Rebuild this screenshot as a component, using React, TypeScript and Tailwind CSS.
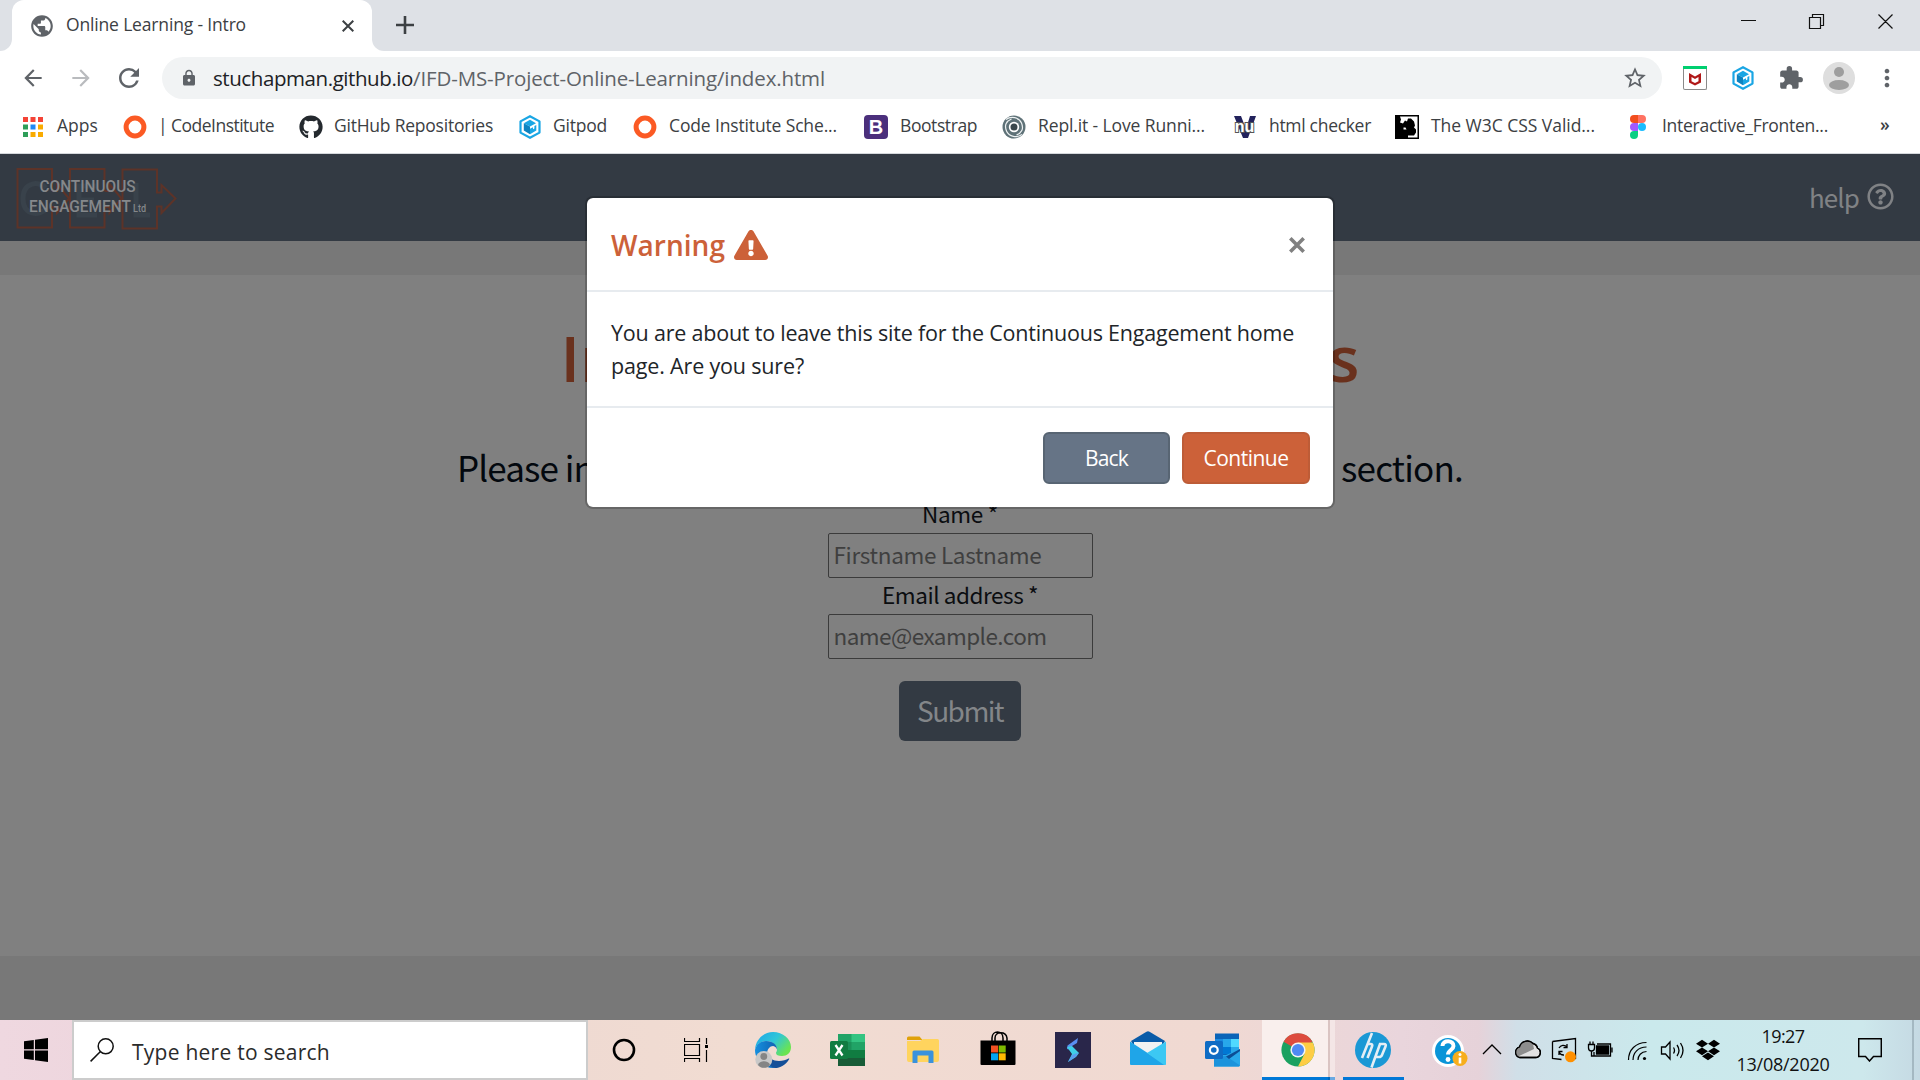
import { useLayoutEffect, useRef, useState } from "react";
import type { ReactNode } from "react";
import { MdArrowBack, MdArrowForward, MdRefresh, MdLock, MdStarBorder, MdExtension, MdMoreVert, MdPublic } from "react-icons/md";
import { FaGithub, FaExclamationTriangle, FaRegQuestionCircle, FaDropbox } from "react-icons/fa";

/* Single-line text whose tracking is adjusted so that it fills the given width. */
function Fit({ w, children, className = "" }: { w: number; children: string; className?: string }) {
  const ref = useRef<HTMLSpanElement>(null);
  const [ls, setLs] = useState(0);
  useLayoutEffect(() => {
    if (ref.current) setLs((w - ref.current.getBoundingClientRect().width) / children.length);
  }, [w, children]);
  return (
    <span ref={ref} className={"inline-block shrink-0 whitespace-pre " + className} style={{ letterSpacing: `${ls}px` }}>
      {children}
    </span>
  );
}

function Gitpod() {
  return (
    <svg viewBox="0 0 22 24" className="h-6 w-[22px]">
      <path d="M11 1.200 20.500 6.400v11.200L11 22.800 1.500 17.600V6.400z" fill="#fff" stroke="#1aa6e4" strokeWidth="2.200" strokeLinejoin="round" />
      <path d="M11 4.800 17 8.200 11 11.600 4.800 8.200z" fill="#1aa6e4" />
      <path d="M4.800 8.200 11 11.600v7.600l-6.200-3.600z" fill="#0d83c0" />
      <path d="M17.300 10v5.600L11 19.200v-5.400l3-1.600v2l1.400-.8V11z" fill="#1aa6e4" />
    </svg>
  );
}
function Ring() {
  return (
    <svg viewBox="0 0 24 24" className="size-6">
      <circle cx="12" cy="12" r="8.900" fill="none" stroke="#fb5a24" strokeWidth="5" />
    </svg>
  );
}
function AppsGrid() {
  const c = ["#f44336", "#f44336", "#f44336", "#2e9e59", "#1e88f5", "#f9ab00", "#2e9e59", "#f9ab00", "#f9ab00"];
  return (
    <svg viewBox="0 0 20 20" className="size-5">
      {c.map((f, i) => (
        <rect key={i} x={(i % 3) * 7.5} y={Math.floor(i / 3) * 7.5} width="5" height="5" fill={f} />
      ))}
    </svg>
  );
}
function Bootstrap() {
  return (
    <span className="flex size-6 items-center justify-center rounded-[4px] bg-[#4b2f7c] font-['Liberation_Sans',sans-serif] text-[20px] leading-none font-bold text-white">B</span>
  );
}
function Swirl() {
  return (
    <svg viewBox="0 0 24 24" className="size-6">
      <circle cx="12" cy="12" r="11.500" fill="#5f7278" />
      <g fill="none" stroke="#eef2f3" strokeWidth="1.200">
        <path d="M4 4.500C9 1 17 2 19.500 8s0 10-5 12" />
        <path d="M20 19.500C15 23 7 22 4.500 16s0-10 5-12" />
      </g>
      <circle cx="12" cy="12" r="5.200" fill="#fff" />
      <circle cx="12" cy="12" r="3.500" fill="#3a474c" />
    </svg>
  );
}
function Nu() {
  return (
    <svg viewBox="0 0 26 24" className="h-6 w-[26px]">
      <path d="M2 1h7l5 13 4-13h6l-8 22h-5z" fill="#22225c" />
      <text x="12.500" y="17" textAnchor="middle" fontFamily="Liberation Sans, sans-serif" fontSize="16" fontWeight="bold" fill="#fff" stroke="#555" strokeWidth="2" paintOrder="stroke">nu</text>
    </svg>
  );
}
function W3C() {
  return (
    <svg viewBox="0 0 24 24" className="size-6">
      <path d="M0 0h24v24H0z" />
      <path d="M5 1.500h17.500v21H13v-2h6l2-3v-3l-2-2 1-2-1-4-3-3h-3l-1 3-2-1-2 3-3-1 1-3z" fill="#fff" />
      <path d="M8.500 12.500h2l1 2h-3z" fill="#fff" />
    </svg>
  );
}
function Figma() {
  return (
    <svg viewBox="0 0 16 24" className="h-6 w-4">
      <path d="M8 0H4a4 4 0 0 0 0 8h4z" fill="#f24e1e" />
      <path d="M8 0h4a4 4 0 0 1 0 8H8z" fill="#ff7262" />
      <path d="M8 8H4a4 4 0 0 0 0 8h4z" fill="#a259ff" />
      <circle cx="12" cy="12" r="4" fill="#1abcfe" />
      <path d="M8 16H4a4 4 0 1 0 4 4z" fill="#0acf83" />
    </svg>
  );
}

function Bookmark({ icon, box, gap, label, w, end }: { icon: ReactNode; box: string; gap: string; label: string; w: number; end: string }) {
  return (
    <div className={"flex shrink-0 items-center " + gap + " " + end}>
      <span className={"flex shrink-0 justify-center " + box}>{icon}</span>
      <Fit w={w} className="pb-[3px]">{label}</Fit>
    </div>
  );
}

function Browser() {
  return (
    <header className="font-['Open_Sans','Noto_Sans',sans-serif] text-[#3c4043]">
      <div className="flex h-[51px] bg-[#dee1e6]">
        <div className="flex h-full w-3 items-end bg-white">
          <div className="h-full w-full rounded-br-[12px] bg-[#dee1e6]" />
        </div>
        <div className="flex h-full w-[360px] bg-[#dee1e6]">
          <div className="flex h-full w-full items-center rounded-t-[12px] bg-white pl-[17px]">
            <MdPublic className="size-[26px] text-[#5f6368]" />
            <div className="ml-[11px] w-[268px] pb-0.5 text-[17.500px]">
              <Fit w={180}>Online Learning - Intro</Fit>
            </div>
            <svg viewBox="0 0 12 12" className="ml-2 size-3 shrink-0" stroke="#3c4043" strokeWidth="2"><path d="m.7.7 10.600 10.600M11.300.7.7 11.300" /></svg>
          </div>
        </div>
        <div className="h-full w-3 bg-white"><div className="h-full w-full rounded-bl-[12px] bg-[#dee1e6]" /></div>
        <svg viewBox="0 0 18 18" className="mt-4 ml-3 size-[18px]" stroke="#3c4043" strokeWidth="2.600"><path d="M9 0v18M0 9h18" /></svg>
        <svg viewBox="0 0 160 20" className="mt-3 mr-[24px] ml-auto h-5 w-[160px]" fill="none" stroke="#111" strokeWidth="1.200">
          <path d="M5 8.500h15M73.500 5.500h11v11h-11zM76.500 5.500v-3h11v11h-3M142.500 2.500l14 14M156.500 2.500l-14 14" />
        </svg>
      </div>
      <div className="flex h-[54px] items-center bg-white pl-[20px] text-[#5f6368]">
        <MdArrowBack className="size-[26px]" />
        <MdArrowForward className="ml-[22px] size-[26px] text-[#b9bbbe]" />
        <MdRefresh className="ml-[20px] size-[30px]" />
        <div className="ml-[18px] flex h-[42px] w-[1500px] items-center rounded-full bg-[#f1f3f4] pl-[18px]">
          <MdLock className="size-[18px]" />
          <div className="ml-[15px] flex pt-px text-[20.500px]">
            <Fit w={200} className="text-[#202124]">stuchapman.github.io</Fit>
            <Fit w={412}>/IFD-MS-Project-Online-Learning/index.html</Fit>
          </div>
          <MdStarBorder className="mr-[14px] ml-auto size-[26px]" />
        </div>
        <div className="ml-[21px] flex h-6 w-6 flex-col items-center rounded-[2px] border border-[#8a8a8a] border-t-0 bg-white">
          <div className="h-[3px] w-6 bg-[#00cf70]" />
          <svg viewBox="0 0 14 14" className="mt-[3px] size-[14px]"><path d="M1 1l6 3.500L13 1v9.500L7 13.500 1 10.500zM3.500 5v4.300L7 11l3.500-1.700V5L7 7z" fill="#b01818" fillRule="evenodd" /></svg>
        </div>
        <div className="ml-[25px]"><Gitpod /></div>
        <MdExtension className="ml-[24px] size-[26px]" />
        <div className="ml-[19px] flex size-8 flex-col items-center justify-center gap-[3px] rounded-full bg-[#dedede]">
          <div className="size-[10px] rounded-full bg-[#9e9e9e]" />
          <div className="h-[10px] w-5 rounded-[50%] bg-[#9e9e9e]" />
        </div>
        <MdMoreVert className="ml-[18px] size-[28px]" />
      </div>
      <div className="flex h-[49px] items-center border-b border-[#d5d8dc] bg-white pb-[5px] pl-[23px] text-[17.500px]">
        <Bookmark icon={<AppsGrid />} box="w-5" gap="gap-[14px]" label="Apps" w={41} end="mr-[25px]" />
        <Bookmark icon={<Ring />} box="w-6" gap="gap-[11px]" label="| CodeInstitute" w={116} end="mr-[25px]" />
        <Bookmark icon={<FaGithub className="size-6 text-[#24292e]" />} box="w-6" gap="gap-[11px]" label="GitHub Repositories" w={159} end="mr-[26px]" />
        <Bookmark icon={<Gitpod />} box="w-[22px]" gap="gap-[12px]" label="Gitpod" w={54} end="mr-[26px]" />
        <Bookmark icon={<Ring />} box="w-6" gap="gap-[12px]" label="Code Institute Sche..." w={168} end="mr-[27px]" />
        <Bookmark icon={<Bootstrap />} box="w-6" gap="gap-[12px]" label="Bootstrap" w={77} end="mr-[25px]" />
        <Bookmark icon={<Swirl />} box="w-6" gap="gap-[12px]" label="Repl.it - Love Runni..." w={167} end="mr-[27px]" />
        <Bookmark icon={<Nu />} box="w-[26px]" gap="gap-[11px]" label="html checker" w={102} end="mr-[24px]" />
        <Bookmark icon={<W3C />} box="w-6" gap="gap-[12px]" label="The W3C CSS Valid..." w={164} end="mr-[35px]" />
        <Bookmark icon={<Figma />} box="w-4" gap="gap-[16px]" label="Interactive_Fronten..." w={166} end="mr-[52px]" />
        <span className="pb-1 font-semibold">»</span>
      </div>
    </header>
  );
}

function Logo() {
  return (
    <svg viewBox="0 0 170 70" className="h-[70px] w-[170px]">
      <g fill="none" stroke="#39424b" strokeWidth="5">
        <path d="M36 25C30 18 13 18 13 35.500S30 53 36 46M86 23H69v29h18M69 37h15M126 20v32h14" />
      </g>
      <g fill="none" stroke="#5d3328" strokeWidth="2">
        <path d="M42 28V6H7.500V64.500H42V44M42 28h5v-7l12 14.500L47 50v-6h-5" />
        <path d="M94.500 28V6H60V64.500H94.500V44M94.500 28h5v-7l12 14.500L99.500 50v-6h-5" />
        <path d="M147 29.500V6.500H112.500V65.500H147V43.500h4.500V50L165.500 35.500 151.500 22v7.500z" />
      </g>
      <g fill="#85888b" fontFamily="Roboto, sans-serif" fontSize="16" fontWeight="500">
        <text x="29.500" y="28.800" textLength="96" lengthAdjust="spacingAndGlyphs">CONTINUOUS</text>
        <text x="19" y="48.800" textLength="102" lengthAdjust="spacingAndGlyphs">ENGAGEMENT</text>
        <text x="123" y="48.800" fontSize="10" textLength="13" lengthAdjust="spacingAndGlyphs">Ltd</text>
      </g>
    </svg>
  );
}

function Field({ label, lw, ph, pw }: { label: string; lw: number; ph: string; pw: number }) {
  return (
    <div className="flex h-[81px] flex-col items-center">
      <div className="flex h-9 items-center pb-0.5 text-[#0b0d10]"><Fit w={lw}>{label}</Fit></div>
      <div className="flex h-[45px] w-[265px] items-center rounded-[2px] border border-[#3b3b3b] pb-0.5 pl-[5px] text-[#3f3f3f]"><Fit w={pw}>{ph}</Fit></div>
    </div>
  );
}

function Page() {
  return (
    <main className="flex h-[866px] flex-col bg-[#808080] font-['Noto_Sans_CJK_SC','Open_Sans',sans-serif]">
      <nav className="flex h-[87px] shrink-0 items-center justify-between bg-[#333a43] pr-[26px] pl-[10px]">
        <Logo />
        <div className="flex items-center gap-2 text-[26px] text-[#808285]">
          <Fit w={50} className="pb-[3px]">help</Fit>
          <FaRegQuestionCircle className="mb-0.5 size-[27px]" />
        </div>
      </nav>
      <div className="h-[34px] shrink-0 bg-[#787878]" />
      <section className="flex grow flex-col items-center">
        <h1 className="mt-[38px] mb-[2px] flex h-[90px] w-[799px] items-center justify-between font-['Open_Sans',sans-serif] text-[64px] font-semibold text-[#6a311d]">
          <span>In</span><span>s</span>
        </h1>
        <p className="mt-[36px] flex h-[56px] w-[1006px] items-center justify-between pb-[3px] text-[35px] text-[#03080e]">
          <Fit w={137}>Please in</Fit><Fit w={122}>section.</Fit>
        </p>
        <div className="text-[22.500px]">
          <Field label="Name *" lw={76} ph="Firstname Lastname" pw={208} />
          <Field label="Email address *" lw={156} ph="name@example.com" pw={213} />
        </div>
        <div className="mt-[22px] flex h-[60px] w-[122px] items-center justify-center rounded-[6px] bg-[#333a43] pb-0.5 text-[28px] text-[#838689]"><Fit w={86}>Submit</Fit></div>
      </section>
      <div className="h-16 shrink-0 bg-[#787878]" />
    </main>
  );
}

function Modal() {
  return (
    <div role="dialog" className="absolute top-[196px] left-[585px] flex h-[313px] w-[750px] flex-col overflow-hidden rounded-[8px] border-2 border-black/20 bg-white bg-clip-padding font-['Open_Sans','Noto_Sans',sans-serif]">
      <div className="flex h-[94px] items-center border-b-2 border-[#e7ebef] pt-0.5 pr-[27px] pl-6">
        <h5 className="flex items-center gap-[9px] text-[28px] font-semibold text-[#cc6139]">
          <Fit w={114}>Warning</Fit>
          <FaExclamationTriangle className="size-[34px]" />
        </h5>
        <svg viewBox="0 0 16 16" className="mr-px mb-px ml-auto size-4" stroke="#808080" strokeWidth="3.600"><path d="m1.300 1.300 13.400 13.400M14.700 1.300 1.300 14.700" /></svg>
      </div>
      <div className="flex h-[116px] flex-col items-start border-b-2 border-[#e7ebef] pt-[24px] pl-6 text-[21.500px] leading-[33px] text-[#212529]">
        <Fit w={683}>You are about to leave this site for the Continuous Engagement home</Fit>
        <Fit w={193}>page. Are you sure?</Fit>
      </div>
      <div className="flex justify-end gap-3 pt-6 pr-[23px] text-[21px] text-white">
        <button className="flex h-[52px] w-[127px] items-center justify-center rounded-[6px] border-2 border-[#586573] bg-[#667486] pt-0.5"><Fit w={43}>Back</Fit></button>
        <button className="flex h-[52px] w-[128px] items-center justify-center rounded-[6px] border-2 border-[#bd5c37] bg-[#cc6139] pt-0.5"><Fit w={85}>Continue</Fit></button>
      </div>
    </div>
  );
}

function Edge() {
  return (
    <svg viewBox="0 0 36 36" className="size-9">
      <defs>
        <linearGradient id="e1" x1="0" x2="1" y1="0" y2=".6"><stop stopColor="#1ea4e9" /><stop offset=".55" stopColor="#2fc6d8" /><stop offset="1" stopColor="#6be450" /></linearGradient>
        <linearGradient id="e2" x1="0" x2="1"><stop stopColor="#1690df" /><stop offset="1" stopColor="#0d5cad" /></linearGradient>
      </defs>
      <path d="M0 17C1 7 9 0 18 0c10 0 18 7 18 15 0 6-4 9-9 9-4 0-6-1-6-3 0-1 1-1.500 1-3.500C22 14 18 9 11 9 6 9 2 12 0 17z" fill="url(#e1)" />
      <path d="M0 18c1-5 5-9 11-9 7 0 11 4 11 8.500-1-3-3-3.500-4-3.500-3 0-6 3-6 8 0 6 5 12 12 12-2 1.300-4 2-6 2C8 36 0 28 0 18z" fill="url(#e2)" />
      <path d="M13 20c0 6 5 9 11 9 4 0 7-1 9.500-2.500.6-.3 1 0 .6.700C31 33 25 36 20 36c-6-1-9-8-7-16z" fill="#144f98" />
      <circle cx="8.800" cy="27.500" r="8.500" fill="#c8c8c8" /><circle cx="8.800" cy="24.500" r="3.400" fill="#858585" /><path d="M3 33c1-5 11-5 12 0-3 3.800-9 3.800-12 0z" fill="#858585" />
    </svg>
  );
}
function Excel() {
  return (
    <svg viewBox="0 0 35 34" className="h-[34px] w-[35px]">
      <path d="M8 1h27v32H8z" fill="#21a366" /><path d="M21.500 1H35v8H21.500z" fill="#33c481" /><path d="M8 17h27v8H8z" fill="#107c41" /><path d="M8 9h13.500v8H8z" fill="#1b9058" /><path d="M8 25h27v8H8z" fill="#185c37" />
      <rect y="8" width="18" height="18" rx="1.500" fill="#107c41" />
      <path d="m5.500 12 7 10.500M12.500 12l-7 10.500" stroke="#fff" strokeWidth="2.300" />
    </svg>
  );
}
function Folder() {
  return (
    <svg viewBox="0 0 32 28" className="h-7 w-8">
      <path d="M0 2a1.500 1.500 0 0 1 1.500-1.500h11l3 3.500H0z" fill="#e0a10a" /><path d="M0 5h13l3-2h14.500A1.500 1.500 0 0 1 32 4.500V24a2 2 0 0 1-2 2H2a2 2 0 0 1-2-2z" fill="#ffd45e" />
      <path d="M5.500 27V16a1.500 1.500 0 0 1 1.500-1.500h18a1.500 1.500 0 0 1 1.500 1.500v11h-5v-7.500h-11V27z" fill="#3a92dc" />
    </svg>
  );
}
function Store() {
  return (
    <svg viewBox="0 0 36 34" className="h-[34px] w-9">
      <path d="M12 10V7c0-8 11-8 11 0v3M15 10V7c0-7 11-7 12 0v3" fill="none" stroke="#000" strokeWidth="1.500" /><path d="M.500 9.500h35V33a1 1 0 0 1-1 1h-33a1 1 0 0 1-1-1z" />
      <path d="M11 14.500h7v7h-7z" fill="#f25022" /><path d="M18.700 14.500h7v7h-7z" fill="#7fba00" /><path d="M11 22.300h7v7h-7z" fill="#00a4ef" /><path d="M18.700 22.300h7v7h-7z" fill="#ffb900" />
    </svg>
  );
}
function Bolt() {
  return (
    <svg viewBox="0 0 36 36" className="size-9">
      <path d="M0 0h36v36H0z" fill="#29264a" /><path d="M23 6 12.500 13.500 12 17l4 1 1-4 5-3z" fill="#5a8ff0" /><path d="m12 15 5-1 7 7-3 4-8 5 4-8z" fill="#3fd0e6" /><path d="m17 23-4 7 8-5.500 2.500-4z" fill="#5b9cee" />
    </svg>
  );
}
function Mail() {
  return (
    <svg viewBox="0 0 36 34" className="h-[34px] w-9">
      <path d="M1 10 16.500.800a3 3 0 0 1 3 0L35 10l-3 5H4z" fill="#0a5ba8" /><path d="M4 11h28v8L19 23 4 19z" fill="#f2f2f2" /><path d="M0 10.500 36 34H1a1 1 0 0 1-1-1z" fill="#1fa5e8" /><path d="M36 10.500V33a1 1 0 0 1-1 1h-1L17 22z" fill="#3cc8f3" />
    </svg>
  );
}
function Outlook() {
  return (
    <svg viewBox="0 0 35 34" className="h-[34px] w-[35px]">
      <path d="M10 .500h24V24H10z" fill="#0a64b8" /><path d="M10 6h8v8h-8z" fill="#1b8ae0" /><path d="M18 6h8v8h-8z" fill="#28a8ea" /><path d="M26 6h8v8h-8z" fill="#50d9ff" /><path d="M18 14h8v7h-8z" fill="#0078d4" /><path d="M26 14h8v6h-8z" fill="#28a8ea" />
      <path d="M9 22h12l14-6v16a1.500 1.500 0 0 1-1.500 1.500H9z" fill="#28a8ea" /><path d="m9 24 12-1 14 9.500-1 1H9z" fill="#1b93dc" /><path d="M21 23.500 35 16v2l-11 8z" fill="#0c4d94" />
      <rect y="8" width="18" height="18" rx="1.500" fill="#0f6cc4" /><circle cx="8.800" cy="17" r="3.900" fill="none" stroke="#fff" strokeWidth="2.200" />
    </svg>
  );
}
function Chrome() {
  return (
    <svg viewBox="0 0 34 34" className="size-[34px]">
      <circle cx="17" cy="17" r="16.600" fill="#1aa160" />
      <path d="M17 17 2.600 8.700A16.600 16.600 0 0 1 31.400 8.700z" fill="#dd4b3e" />
      <path d="M17 9.400h14.800A16.600 16.600 0 0 1 17 33.600l6.600-12.800z" fill="#fdcd45" />
      <circle cx="17" cy="17" r="7.600" fill="#f4f4f4" /><circle cx="17" cy="17" r="6.100" fill="#4f8af4" />
    </svg>
  );
}
function Hp() {
  return (
    <svg viewBox="0 0 36 36" className="size-9">
      <circle cx="18" cy="18" r="18" fill="#1a98d5" />
      <path d="M17 1 7 26M12 12h3.500q2.500 0 1.500 2.500L12.500 26M16.500 35.500 25 12h4q2.500 0 1.500 2.500L27 23q-.800 2-3 2h-3.500" fill="none" stroke="#e4eef5" strokeWidth="2.600" />
    </svg>
  );
}
function HelpBadge() {
  return (
    <svg viewBox="0 0 36 34" className="h-[34px] w-9">
      <circle cx="16" cy="16" r="16" fill="#fff" /><circle cx="16" cy="16" r="13" fill="#0a95d8" />
      <path d="M10.500 11c0-6.500 11.500-6 11 0 0 4-5.500 4-5.500 8.500" fill="none" stroke="#fff" strokeWidth="4" /><circle cx="16" cy="24.500" r="2.400" fill="#fff" />
      <circle cx="28" cy="23.500" r="7.500" fill="#f7ae1c" /><circle cx="28" cy="19.500" r="1.500" fill="#fff" /><path d="M28 22.500v6" stroke="#fff" strokeWidth="2.600" />
    </svg>
  );
}

/* Notification-area glyphs: hidden icons, cloud, update, battery, Wi-Fi, volume. */
function TrayGlyphs() {
  return (
    <svg viewBox="0 0 206 30" className="h-[30px] w-[206px]" fill="none" stroke="#000" strokeWidth="1.300">
      <path d="m3 19 9-9 9 9" />
      <g transform="translate(-1.500 0)">
        <path d="M41 22.500a5.500 5.500 0 0 1 0-10.500 8 8 0 0 1 13.500-3.500 6 6 0 0 1 4.500 4.500 5 5 0 0 1-2 9.500z" fill="#e2e2e2" />
        <path d="M41 22a5 5 0 0 1 0-9.500 8 8 0 0 1 13.500-3.500l1 5-15 7z" fill="#8d8d8d" stroke="none" />
        <path d="M41 22.500a5.500 5.500 0 0 1 0-10.500 8 8 0 0 1 13.500-3.500 6 6 0 0 1 4.500 4.500 5 5 0 0 1-2 9.500z" />
      </g>
      <path d="M72.500 6.500 95.500 3.500v20l-3 .5M72.500 6.500v17l9 1M79 13a5 5 0 0 1 8-1m0-3v3.500h-3.500M79 20v-3.500h3.500M79 17a5 5 0 0 0 5 3" />
      <circle cx="90.500" cy="21.800" r="5.500" fill="#ff9000" stroke="none" />
      <path d="M117 9h13.500v12H114v-4M132 12.500v5M108.500 9.500h6v3.500a3 3 0 0 1-6 0zM110 9.500V6.500M113 9.500V6.500M111.500 16v5h3" /><path d="M116.500 11h12v8h-12z" fill="#000" />
      <path d="M148.500 25C148.500 15 155.500 7.500 166.500 7.500M153 25c0-7 5-13 13.500-13M158 25c0-4 3-8.500 8.500-8.500" strokeWidth="1.200" /><circle cx="164.500" cy="23.500" r="1.600" fill="#000" stroke="none" />
      <path d="M181.500 12h4l4.500-5v17l-4.500-5h-4zM193.500 12.500q2 3 0 6M197 10q4 5.500 0 11M200.500 8q5 7.500 0 15" />
    </svg>
  );
}

function Taskbar() {
  return (
    <footer className="flex h-[60px] items-center bg-[linear-gradient(90deg,#efd8e0_0%,#eed6de_5%,#efdad2_30%,#f1dcd2_38%,#f0d9d2_63%,#e9d5dc_73%,#e6d2d9_77%,#d0dfe8_79%,#cae9ec_86%,#cde8ec_97%,#c5d9e3_100%)] font-['Open_Sans','Noto_Sans',sans-serif]">
      <svg viewBox="0 0 24 24" className="ml-6 size-6"><path d="M0 3.300 9.800 2v9.300H0zM11 1.800 24 0v11.300H11zM0 12.500h9.800V22L0 20.700zM11 12.500h13V24l-13-1.800z" /></svg>
      <div className="ml-6 flex h-[60px] w-[516px] items-center border-2 border-[#ccc] bg-white pl-4">
        <svg viewBox="0 0 24 24" className="size-6" fill="none" stroke="#111" strokeWidth="1.500"><circle cx="15.700" cy="8.300" r="7.500" /><path d="M10.200 13.800.600 23.400" /></svg>
        <div className="ml-[18px] pt-[5px] text-[21px] text-[#2b2b2b]"><Fit w={198}>Type here to search</Fit></div>
      </div>
      <svg viewBox="0 0 24 24" className="ml-6 size-6"><circle cx="12" cy="12" r="10" fill="none" stroke="#000" strokeWidth="2.600" /></svg>
      <svg viewBox="0 0 24 24" className="ml-12 size-6" fill="none" stroke="#000" strokeWidth="1.200"><path d="M.500 0v3.500h15V0M.500 6.500h15v11H.500zM.500 24v-3.500h15V24M22.500 0v6M22.500 12v12" /><path d="M21 7h3v3h-3z" fill="#000" stroke="none" /></svg>
      <div className="ml-[47px]"><Edge /></div>
      <div className="ml-[39px]"><Excel /></div>
      <div className="ml-[42px]"><Folder /></div>
      <div className="ml-[41px] pb-1"><Store /></div>
      <div className="ml-[39px]"><Bolt /></div>
      <div className="ml-[39px] pb-1"><Mail /></div>
      <div className="ml-[39px]"><Outlook /></div>
      <div className="ml-[22px] flex h-full w-[66px] items-center justify-center border-b-[3px] border-[#0078d7] bg-[#f9efed] pt-[3px] pl-[5px]"><Chrome /></div>
      <div className="h-full w-0.5 border-b-[3px] border-[#0068bd] bg-[#dac4c2]" />
      <div className="h-full w-[5px] border-b-[3px] border-[#69a9e2] bg-[#f4e6e6]" />
      <div className="ml-2 flex h-full w-[61px] items-center justify-center border-b-[3px] border-[#0078d7] pt-[3px] pr-px"><Hp /></div>
      <div className="ml-[28px] pt-1"><HelpBadge /></div>
      <div className="ml-[12px]"><TrayGlyphs /></div>
      <FaDropbox className="ml-[10px] size-6" />
      <div className="ml-[13px] flex w-[100px] flex-col items-center text-[18px] leading-[28px] text-[#111]"><Fit w={43}>19:27</Fit><Fit w={93}>13/08/2020</Fit></div>
      <svg viewBox="0 0 24 24" className="ml-[25px] size-6" fill="none" stroke="#000" strokeWidth="1.500"><path d="M.700.700h22.600V18.500H15.500L11.500 23l-4-4.500H.700z" /></svg>
      <div className="ml-auto h-full w-2 border-l-2 border-[#a4b8c2]" />
    </footer>
  );
}

export default function App() {
  return (
    <div className="relative h-[1080px] w-[1920px] overflow-hidden">
      <Browser />
      <Page />
      <Taskbar />
      <Modal />
    </div>
  );
}
